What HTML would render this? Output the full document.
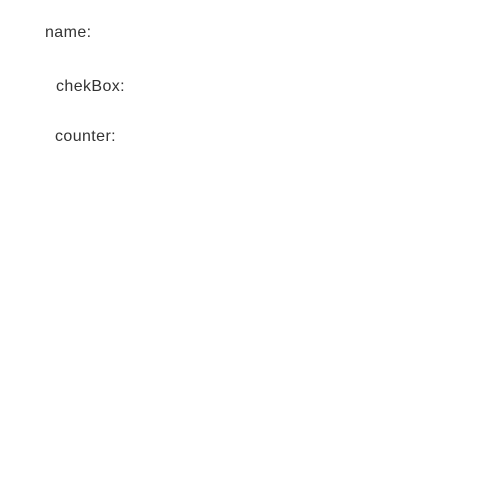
<!DOCTYPE html>
<html><head><style>
body{margin:0;width:500px;height:500px;background:#fff;font-family:"Liberation Sans",sans-serif;font-size:16px;color:#333;position:relative}
div{position:absolute;line-height:20px;letter-spacing:0.4px}
</style></head><body>
<div style="left:45px;top:23px">name:</div>
<div style="left:56px;top:77px">chekBox:</div>
<div style="left:55px;top:127px">counter:</div>
</body></html>
